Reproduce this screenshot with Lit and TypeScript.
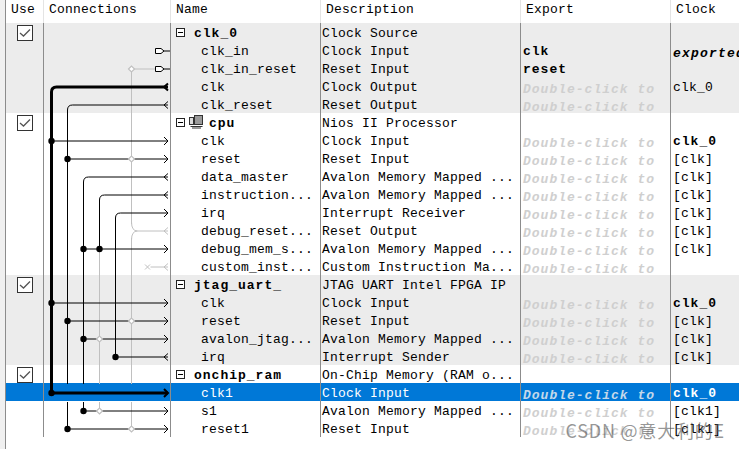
import { LitElement, html, css, svg } from "lit";
import { customElement } from "lit/decorators.js";

type Row = { name: string; desc: string; exp?: string; clock?: string; head?: boolean; icon?: boolean; gray?: boolean; sel?: boolean; clockBold?: boolean; clockItalic?: boolean };
const DC = "Double-click to";
const rows: Row[] = [
  { name: "clk_0", desc: "Clock Source", head: true, gray: true },
  { name: "clk_in", desc: "Clock Input", exp: "clk", gray: true, clock: "exported", clockBold: true, clockItalic: true },
  { name: "clk_in_reset", desc: "Reset Input", exp: "reset", gray: true },
  { name: "clk", desc: "Clock Output", exp: DC, clock: "clk_0", gray: true },
  { name: "clk_reset", desc: "Reset Output", exp: DC, gray: true },
  { name: "cpu", desc: "Nios II Processor", head: true, icon: true },
  { name: "clk", desc: "Clock Input", exp: DC, clock: "clk_0", clockBold: true },
  { name: "reset", desc: "Reset Input", exp: DC, clock: "[clk]" },
  { name: "data_master", desc: "Avalon Memory Mapped ...", exp: DC, clock: "[clk]" },
  { name: "instruction...", desc: "Avalon Memory Mapped ...", exp: DC, clock: "[clk]" },
  { name: "irq", desc: "Interrupt Receiver", exp: DC, clock: "[clk]" },
  { name: "debug_reset...", desc: "Reset Output", exp: DC, clock: "[clk]" },
  { name: "debug_mem_s...", desc: "Avalon Memory Mapped ...", exp: DC, clock: "[clk]" },
  { name: "custom_inst...", desc: "Custom Instruction Ma...", exp: DC },
  { name: "jtag_uart_", desc: "JTAG UART Intel FPGA IP", head: true, gray: true },
  { name: "clk", desc: "Clock Input", exp: DC, clock: "clk_0", clockBold: true, gray: true },
  { name: "reset", desc: "Reset Input", exp: DC, clock: "[clk]", gray: true },
  { name: "avalon_jtag...", desc: "Avalon Memory Mapped ...", exp: DC, clock: "[clk]", gray: true },
  { name: "irq", desc: "Interrupt Sender", exp: DC, clock: "[clk]", gray: true },
  { name: "onchip_ram", desc: "On-Chip Memory (RAM o...", head: true },
  { name: "clk1", desc: "Clock Input", exp: DC, clock: "clk_0", clockBold: true, sel: true },
  { name: "s1", desc: "Avalon Memory Mapped ...", exp: DC, clock: "[clk1]" },
  { name: "reset1", desc: "Reset Input", exp: DC, clock: "[clk1]" },
];

const cy = (i: number) => 33 + i * 18;
const SX = 124;
const BLK = "#000";
const GRY = "#c0c0c0";

function elbow(x: number, rowI: number, y2: number, c: string, w = 1) {
  const y = cy(rowI);
  return svg`<path d="M${x} ${y2} V${y + 5} Q${x} ${y} ${x + 5} ${y} H${SX}" fill="none" stroke=${c} stroke-width=${w} />`;
}
const arrowIn = (i: number, c = BLK, w = 1) => {
  const y = cy(i);
  return svg`<path d="M${SX} ${y - 3.5} L${SX - 4} ${y} L${SX} ${y + 3.5}" fill="none" stroke=${c} stroke-width=${w} />`;
};
const arrowOut = (i: number, c = BLK, w = 1) => {
  const y = cy(i);
  return svg`<path d="M${SX - 4} ${y - 4} L${SX} ${y} L${SX - 4} ${y + 4}" fill="none" stroke=${c} stroke-width=${w} />`;
};
const hline = (x: number, i: number, c = BLK, w = 1) =>
  svg`<path d="M${x} ${cy(i)} H${SX}" stroke=${c} stroke-width=${w} fill="none" />`;
const dot = (x: number, i: number) =>
  svg`<circle cx=${x} cy=${cy(i)} r="3.2" fill="#000" />`;
const ring = (x: number, i: number) =>
  svg`<path d="M${x - 3} ${cy(i)} L${x} ${cy(i) - 3} L${x + 3} ${cy(i)} L${x} ${cy(i) + 3} Z" fill="#fff" stroke=${GRY} stroke-width="1.2" />`;
const vline = (x: number, y1: number, y2: number, c = BLK, w = 1) =>
  svg`<path d="M${x} ${y1} V${y2}" stroke=${c} stroke-width=${w} fill="none" />`;
const exportStub = (i: number) => {
  const y = cy(i);
  return svg`<path d="M120 ${y} H126" stroke="#000" /><path d="M111.5 ${y - 2.5} H117 L120 ${y} L117 ${y + 2.5} H111.5 Z" fill="#fff" stroke="#000" />`;
};

// x positions of the vertical buses, relative to the Connections column (which starts at x=44)
const X0 = 7.5, X1 = 23.5, X2 = 39.5, X3 = 55.5, X4 = 71.5, X5 = 87.5;

const canvas = svg`
  <svg class="wires" width="126" height="438" viewBox="0 0 126 438">
    <!-- grey buses -->
    ${vline(X5, 69, 224, GRY)}
    ${vline(X5, 238, 384, GRY)}
    ${vline(X5, 402, 429, GRY)}
    ${vline(X3, 249, 384, GRY)}
    ${vline(X3, 402, 411, GRY)}
    ${svg`<path d="M${X5} 222 Q${X5} 231 ${X5 + 6} 231 H${SX} M${X5} 240 Q${X5} 231 ${X5 + 6} 231" fill="none" stroke=${GRY} />`}
    ${arrowIn(11, GRY)}
    ${svg`<path d="M${X5} 69 H112" stroke=${GRY} fill="none" />`}
    ${svg`<path d="M106.5 267 H${SX} M101 264.5 L106 269.5 M106 264.5 L101 269.5" stroke=${GRY} fill="none" />`}
    ${arrowIn(13, GRY)}
    ${exportStub(1)}
    ${exportStub(2)}
    ${ring(X5, 2)}
    <!-- black buses -->
    ${elbow(X0, 3, 393, BLK, 3)}
    ${arrowIn(3, BLK, 2)}
    ${elbow(X1, 4, 384, BLK)}
    ${vline(X1, 402, 429)}
    ${arrowIn(4)}
    ${elbow(X2, 8, 384, BLK)}
    ${vline(X2, 402, 411)}
    ${arrowIn(8)}
    ${elbow(X3, 9, 249, BLK)}
    ${arrowIn(9)}
    ${elbow(X4, 10, 357, BLK)}
    ${arrowOut(10)}
    ${[6, 15].map((i) => svg`${hline(X0, i)}${arrowOut(i)}${dot(X0, i)}`)}
    ${[7, 16, 22].map((i) => svg`${hline(X1, i)}${arrowOut(i)}${dot(X1, i)}${ring(X5, i)}`)}
    ${hline(X2, 12)}${arrowOut(12)}${dot(X2, 12)}${dot(X3, 12)}
    ${hline(X2, 17)}${arrowOut(17)}${dot(X2, 17)}${ring(X3, 17)}
    ${hline(X4, 18)}${arrowIn(18)}${dot(X4, 18)}
    ${hline(X2, 21)}${arrowOut(21)}${dot(X2, 21)}${ring(X3, 21)}
    ${hline(X0, 20, BLK, 3)}${arrowOut(20, BLK, 2)}${dot(X0, 20)}
  </svg>`;

const check = html`<svg class="check" width="16" height="16" viewBox="0 0 16 16">
  <rect x="0.5" y="0.5" width="15" height="15" fill="#fff" stroke="#333" />
  <path d="M3 8 L6.5 11 L13 4.5" fill="none" stroke="#555" stroke-width="1.3" />
</svg>`;

const minus = html`<svg class="minus" width="9" height="9" viewBox="0 0 9 9">
  <rect x="0.5" y="0.5" width="8" height="8" fill="#fff" stroke="#222" />
  <path d="M2 4.5 H7" stroke="#000" />
</svg>`;

const cpuIcon = html`<svg class="cpu" width="14" height="14" viewBox="0 0 14 14">
  <rect x="5.5" y="0.5" width="8" height="9" fill="#9a9a9a" stroke="#333" />
  <rect x="0.5" y="2.5" width="4" height="7" fill="#ddd" stroke="#333" />
  <path d="M1.5 11.5 H13.5 M3 13 H12" stroke="#333" />
</svg>`;

@customElement("app-root")
export class AppRoot extends LitElement {
  static styles = css`
    :host {
      display: block;
      width: 739px;
      height: 449px;
      overflow: hidden;
      background: #fff;
      font-family: "Liberation Mono", "DejaVu Sans Mono", monospace;
      font-size: 13px;
      letter-spacing: 0.2px;
      color: #000;
      position: relative;
    }
    .table { display: grid; grid-template-columns: 6px 37px 127px 150px 200px 150px 69px; }
    .strip {
      grid-row: 1 / span 24;
      background: #f0f0f0;
      height: 449px;
      box-sizing: border-box;
      border-right: 1px solid #8c8c8c;
    }
    .hd {
      height: 23px;
      box-sizing: border-box;
      padding: 1px 0 0 5px;
      line-height: 17px;
      border-left: 1px solid #e4e4e4;
      white-space: nowrap;
      overflow: hidden;
    }
    .hd.first { border-left: none; }
    .body {
      grid-column: 2 / span 6;
      display: flex;
      flex-direction: column;
      position: relative;
    }
    .row {
      display: grid;
      grid-template-columns: 37px 127px 150px 200px 150px 69px;
      height: 18px;
    }
    .row.gray { background: #ececec; }
    .row.sel { background: #0078d7; color: #fff; }
    .c {
      border-left: 1px solid #8c8c8c;
      white-space: nowrap;
      overflow-x: clip;
      overflow-y: visible;
      min-width: 0;
      box-sizing: border-box;
      height: 18px;
      padding-top: 4px;
      line-height: 14px;
    }
    .use {
      border-left: none;
      display: flex;
      justify-content: center;
      align-items: flex-start;
      overflow: visible;
      position: relative;
      padding-top: 0;
    }
    .check { margin-top: 2px; position: relative; z-index: 1; }
    .name { padding-left: 30px; }
    .name.head { padding-left: 5px; display: flex; align-items: center; gap: 9px; font-weight: 700; letter-spacing: 1px; padding-top: 0; }
    .name.head b { margin-top: 4px; line-height: 14px; }
    .name.head.ic { gap: 4px; }
    .name.head.ic b { margin-left: 2px; }
    .minus { flex: none; }
    .cpu { flex: none; }
    .desc { padding-left: 1px; }
    .exp { padding-left: 2px; font-weight: 700; letter-spacing: 1px; }
    .exp.hint { color: #cfcfcf; font-style: italic; }
    .row.sel .exp.hint { color: #c4d8ea; }
    .low { display: inline-block; transform: translateY(2px); }
    .clk { padding-left: 2px; }
    .clk.b { font-weight: 700; letter-spacing: 1px; }
    .clk.i { font-style: italic; letter-spacing: 1.2px; }
    .wires { position: absolute; left: 38px; top: 0; pointer-events: none; overflow: visible; }
    .wires-host { position: absolute; left: 0; top: -23px; }
    .mark {
      position: absolute;
      right: 14px;
      bottom: 6px;
      font-family: "Noto Sans CJK SC", "Noto Sans", sans-serif;
      font-size: 18px;
      letter-spacing: 0.8px;
      color: rgba(80, 80, 80, 0.6);
      white-space: nowrap;
    }
  `;

  render() {
    return html`
      <div class="table">
        <div class="strip"></div>
        <div class="hd first">Use</div>
        <div class="hd">Connections</div>
        <div class="hd">Name</div>
        <div class="hd">Description</div>
        <div class="hd">Export</div>
        <div class="hd">Clock</div>
        <div class="body">
          ${rows.map(
            (r) => html`<div class="row ${r.gray ? "gray" : ""} ${r.sel ? "sel" : ""}">
              <div class="c use">${r.head ? check : ""}</div>
              <div class="c"></div>
              <div class="c name ${r.head ? "head" : ""} ${r.icon ? "ic" : ""}">
                ${r.head ? minus : ""}${r.icon ? cpuIcon : ""}${r.head ? html`<b>${r.name}</b>` : r.name}
              </div>
              <div class="c desc">${r.desc}</div>
              <div class="c exp ${r.exp === DC ? "hint" : ""}">${r.exp === DC ? html`<span class="low">${DC}</span>` : r.exp ?? ""}</div>
              <div class="c clk ${r.clockBold ? "b" : ""} ${r.clockItalic ? "i" : ""}">${r.clockItalic ? html`<span class="low">${r.clock}</span>` : r.clock ?? ""}</div>
            </div>`
          )}
          <div class="wires-host">${canvas}</div>
        </div>
      </div>
      <div class="mark">CSDN @意大利的E</div>
    `;
  }
}
